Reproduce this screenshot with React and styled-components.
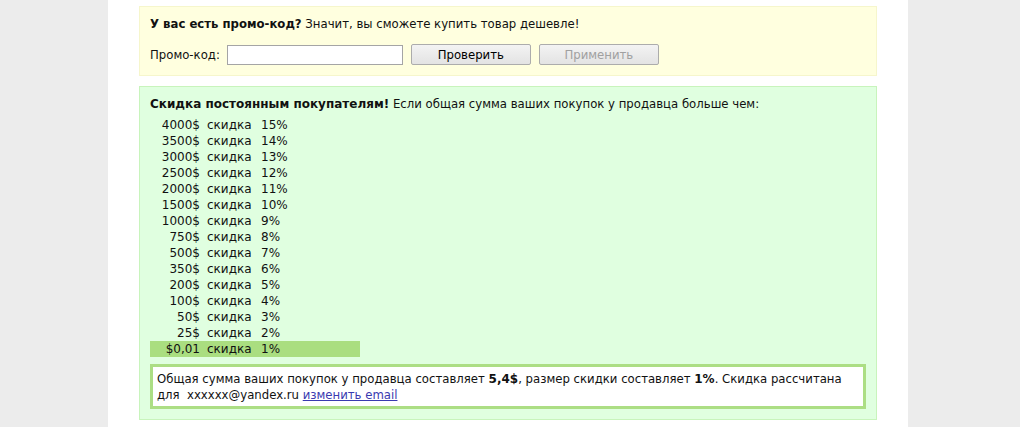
import React from "react";
import styled, { createGlobalStyle } from "styled-components";

const Global = createGlobalStyle`
  html, body { margin: 0; padding: 0; background: #ececec; }
  body { font-family: "DejaVu Sans Condensed", "DejaVu Sans", sans-serif; font-size: 13px; color: #111; }
`;

const Column = styled.div`
  width: 800px;
  margin-left: 108px;
  min-height: 427px;
  background: #fff;
  box-sizing: border-box;
  padding: 6px 31px 0;
  display: flex;
  flex-direction: column;
  gap: 10px;
`;

const PromoBox = styled.section`
  background: #ffffdf;
  border: 1px solid #f6f6cc;
  padding: 9px 10px 10px;
  display: flex;
  flex-direction: column;
  gap: 12px;
`;

const Line = styled.div`
  line-height: 16px;
  font-family: "DejaVu Sans Condensed", "DejaVu Sans", sans-serif;
  font-size: 13px;
`;

const Strong = styled.b`
  font-weight: bold;
  font-family: ${p => (p.$wide ? '"DejaVu Sans", sans-serif' : '"DejaVu Sans Condensed", "DejaVu Sans", sans-serif')};
  font-size: ${p => (p.$wide ? "12px" : "13px")};
`;

const Controls = styled.div`
  display: flex;
  align-items: center;
  height: 21px;
`;

const Label = styled.label`
  margin-right: 7px;
`;

const Input = styled.input`
  width: 176px;
  height: 20px;
  box-sizing: border-box;
  border: 1px solid #a5a5a5;
  background: #fff;
  margin: 0 8px 0 0;
  padding: 0 3px;
`;

const Button = styled.button`
  width: 120px;
  height: 21px;
  box-sizing: border-box;
  margin-right: 8px;
  border: 1px solid #acacac;
  border-radius: 2px;
  background: linear-gradient(#f3f3f3, #e3e3e3);
  font-family: "DejaVu Sans Condensed", "DejaVu Sans", sans-serif;
  font-size: 13px;
  color: ${p => (p.disabled ? "#a0a0a0" : "#000")};
  padding: 0;
`;

const DiscountBox = styled.section`
  background: #e0ffe0;
  border: 1px solid #c8f4bc;
  padding: 9px 10px 10px;
`;

const Table = styled.div`
  margin: 5px 0 7px;
  display: flex;
  flex-direction: column;
  font-family: "DejaVu Sans", sans-serif;
  font-size: 12px;
  color: #111;
`;

const Row = styled.div`
  width: 210px;
  height: 16px;
  line-height: 16px;
  display: grid;
  grid-template-columns: 50px 61px 1fr;
  background: ${p => (p.$active ? "#aade80" : "transparent")};
`;

const Amount = styled.span`
  text-align: right;
`;

const Word = styled.span`
  padding-left: 7px;
`;

const Summary = styled.div`
  border: 3px solid #acde84;
  background: #fff;
  padding: 4px 4px;
  line-height: 15px;
  font-family: "DejaVu Sans Condensed", "DejaVu Sans", sans-serif;
  font-size: 13px;
`;

const Link = styled.a`
  color: #3a3ab0;
  text-decoration: underline;
`;

const rows = [
  ["4000$", "15%"],
  ["3500$", "14%"],
  ["3000$", "13%"],
  ["2500$", "12%"],
  ["2000$", "11%"],
  ["1500$", "10%"],
  ["1000$", "9%"],
  ["750$", "8%"],
  ["500$", "7%"],
  ["350$", "6%"],
  ["200$", "5%"],
  ["100$", "4%"],
  ["50$", "3%"],
  ["25$", "2%"],
  ["$0,01", "1%"],
];

export default function App() {
  return (
    <>
      <Global />
      <Column>
        <PromoBox>
          <Line>
            <Strong>У вас есть промо-код?</Strong> Значит, вы сможете купить товар дешевле!
          </Line>
          <Controls>
            <Label>Промо-код:</Label>
            <Input type="text" />
            <Button>Проверить</Button>
            <Button disabled>Применить</Button>
          </Controls>
        </PromoBox>
        <DiscountBox>
          <Line>
            <Strong $wide>Скидка постоянным покупателям!</Strong> Если общая сумма ваших покупок у продавца больше чем:
          </Line>
          <Table>
            {rows.map(([a, p], i) => (
              <Row key={a} $active={i === rows.length - 1}>
                <Amount>{a}</Amount>
                <Word>скидка</Word>
                <span>{p}</span>
              </Row>
            ))}
          </Table>
          <Summary>
            Общая сумма ваших покупок у продавца составляет <Strong $wide>5,4$</Strong>, размер скидки составляет <Strong $wide>1%</Strong>. Скидка рассчитана для&nbsp; xxxxxx@yandex.ru <Link href="#">изменить email</Link>
          </Summary>
        </DiscountBox>
      </Column>
    </>
  );
}
